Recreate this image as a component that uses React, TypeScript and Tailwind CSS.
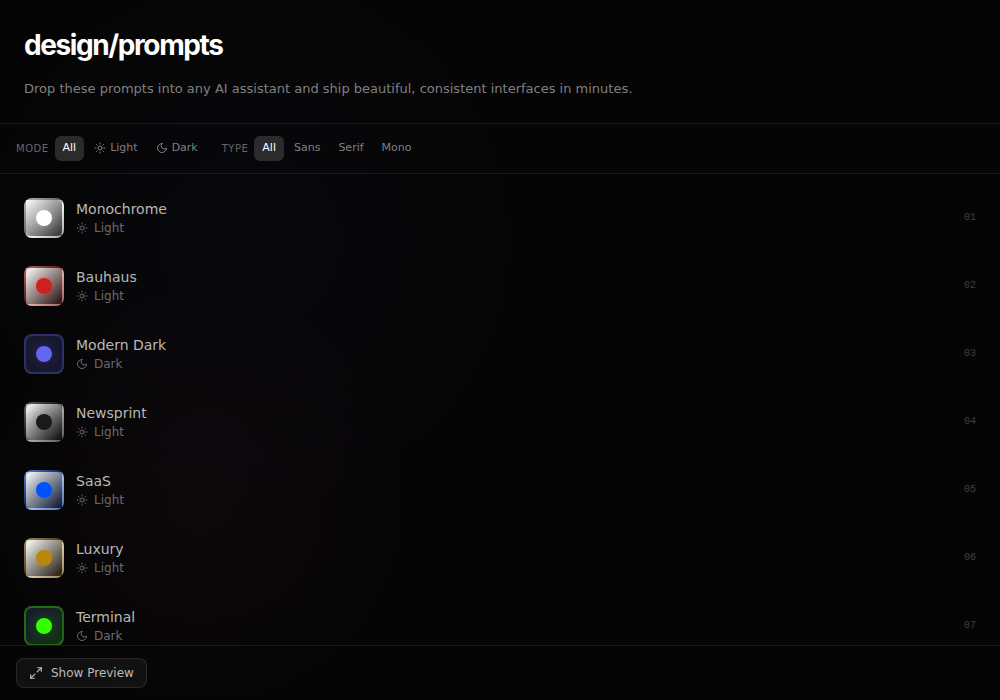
import { useState } from "react";
import { Maximize2, Sun } from "lucide-react";

type Mode = "Light" | "Dark";

const STYLES: { name: string; mode: Mode; swatch: string; dot: string }[] = [
  {
    name: "Monochrome",
    mode: "Light",
    swatch: "border-[#ffffff40] from-white to-[#ffffff28]",
    dot: "bg-white shadow-[0_0_12px_#ffffff40]",
  },
  {
    name: "Bauhaus",
    mode: "Light",
    swatch: "border-[#d0202050] from-white to-[#d0202020]",
    dot: "bg-[#d02020] shadow-[0_0_12px_#d0202040]",
  },
  {
    name: "Modern Dark",
    mode: "Dark",
    swatch: "border-[#6366f150] from-[#1a1a2e] to-[#6366f130]",
    dot: "bg-[#6366f1] shadow-[0_0_12px_#6366f140]",
  },
  {
    name: "Newsprint",
    mode: "Light",
    swatch: "border-[#1a1a1a50] from-white to-[#1a1a1a30]",
    dot: "bg-[#1a1a1a] shadow-[0_0_12px_#1a1a1a40]",
  },
  {
    name: "SaaS",
    mode: "Light",
    swatch: "border-[#0052ff50] from-white to-[#0052ff20]",
    dot: "bg-[#0052ff] shadow-[0_0_12px_#0052ff40]",
  },
  {
    name: "Luxury",
    mode: "Light",
    swatch: "border-[#b8860b50] from-white to-[#b8860b20]",
    dot: "bg-[#b8860b] shadow-[0_0_12px_#b8860b40]",
  },
  {
    name: "Terminal",
    mode: "Dark",
    swatch: "border-[#33ff0050] from-[#1a1a2e] to-[#33ff0030]",
    dot: "bg-[#33ff00] shadow-[0_0_12px_#33ff0040]",
  },
];

const MODES = ["All", "Light", "Dark"];
const TYPES = ["All", "Sans", "Serif", "Mono"];

const MoonIcon = () => (
  <svg
    viewBox="0 0 24 24"
    className="size-3"
    fill="none"
    stroke="currentColor"
    strokeWidth={2}
    strokeLinecap="round"
    strokeLinejoin="round"
    aria-hidden="true"
  >
    <path d="M12 3a6 6 0 0 0 9 9 9 9 0 1 1-9-9Z" />
  </svg>
);

const ModeIcon = ({ mode }: { mode: string }) =>
  mode === "Light" ? <Sun className="size-3" strokeWidth={2} /> : <MoonIcon />;

type FilterProps = {
  label: string;
  options: string[];
  value: string;
  onChange: (value: string) => void;
};

const Filter = ({ label, options, value, onChange }: FilterProps) => (
  <div className="flex items-center gap-1.5" role="group" aria-label={label}>
    <span className="text-[10px] uppercase tracking-wider text-[#666]">{label}</span>
    <div className="flex gap-0.5">
      {options.map((option) => (
        <button
          key={option}
          type="button"
          aria-pressed={value === option}
          onClick={() => onChange(option)}
          className={`flex items-center gap-1 rounded-md px-2 pt-1 pb-1.5 text-[11px] leading-[15px] ${
            value === option ? "bg-white/15 text-white" : "text-[#808080]"
          }`}
        >
          {(option === "Light" || option === "Dark") && <ModeIcon mode={option} />}
          {option}
        </button>
      ))}
    </div>
  </div>
);

const App = () => {
  const [mode, setMode] = useState("All");
  const [type, setType] = useState("All");

  return (
    <div className="flex h-screen flex-col overflow-hidden bg-[#050505] bg-[radial-gradient(circle_at_250px_240px,#6366f108,transparent_280px),radial-gradient(circle_at_200px_500px,#ec489909,transparent_220px)] font-['DejaVu_Sans',sans-serif]">
      <header className="border-b border-white/8 px-6 pt-7 pb-6">
        <h1 className="font-['Inter',sans-serif] text-[28px] leading-[34px] font-bold tracking-tighter text-white [font-optical-sizing:none]">
          design/prompts
        </h1>
        <p className="mt-4 text-[13px] leading-[21px] text-[#808080]">
          Drop these prompts into any AI assistant and ship beautiful, consistent interfaces in minutes.
        </p>
      </header>

      <div className="flex gap-4 border-b border-white/8 px-4 py-3">
        <Filter label="Mode" options={MODES} value={mode} onChange={setMode} />
        <Filter label="Type" options={TYPES} value={type} onChange={setType} />
      </div>

      <ul className="flex min-h-0 flex-1 flex-col gap-1 overflow-hidden p-3">
        {STYLES.map((style, i) => (
          <li key={style.name} className="shrink-0">
            <button type="button" className="flex w-full items-center gap-3 p-3 text-left">
              <span
                className={`flex size-10 items-center justify-center rounded-lg border-2 bg-linear-135 ${style.swatch}`}
              >
                <span className={`size-4 rounded-full ${style.dot}`} />
              </span>
              <span className="flex-1">
                <span className="block text-sm leading-5 text-[#b8b8b8]">{style.name}</span>
                <span className="flex items-center gap-1.5 text-xs leading-[18px] text-[#6b6b6b]">
                  <ModeIcon mode={style.mode} />
                  {style.mode}
                </span>
              </span>
              <span className="pb-0.5 font-['Liberation_Mono',monospace] text-[10px] text-[#404040]">
                {String(i + 1).padStart(2, "0")}
              </span>
            </button>
          </li>
        ))}
      </ul>

      <footer className="flex border-t border-white/8 px-4 py-3">
        <button
          type="button"
          className="flex items-center gap-2 rounded-lg border border-white/10 bg-white/5 px-3 py-1.5 text-xs leading-4 text-[#bbb]"
        >
          <Maximize2 className="size-3.5" strokeWidth={2} />
          Show Preview
        </button>
      </footer>
    </div>
  );
};

export default App;
